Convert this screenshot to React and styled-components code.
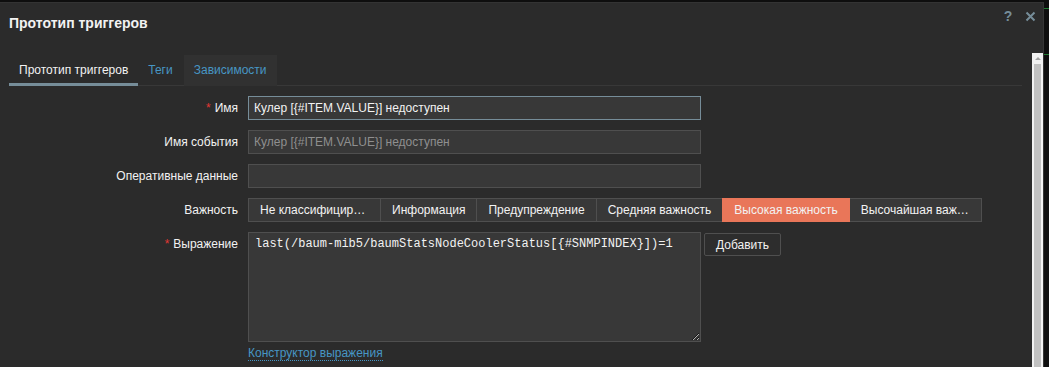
import React from "react";
import styled, { createGlobalStyle } from "styled-components";

const GlobalStyle = createGlobalStyle`
  html, body { margin: 0; padding: 0; background: #0e0e0e; }
  body { font-family: "Liberation Sans", Arial, sans-serif; font-size: 12px; color: #f2f2f2; }
  * { box-sizing: border-box; }
`;

const Page = styled.div`
  display: flex;
  height: 367px;
  overflow: hidden;
  background: #0e0e0e;
`;

const Dialog = styled.div`
  width: 1044px;
  margin-top: 2px;
  background: #2b2b2b;
  border-top: 1px solid #333333;
  border-right: 1px solid #353535;
  display: flex;
  flex-direction: column;
`;

const Backdrop = styled.div`
  flex: 1;
  display: flex;
  flex-direction: column;
`;

const GreenLine = styled.div`
  height: 1px;
  background: #1f7a31;
  margin-top: ${(p) => p.$top}px;
`;

const Header = styled.div`
  height: 50px;
  display: flex;
  align-items: flex-start;
  justify-content: space-between;
  padding: 3px 3px 0 9px;
`;

const Title = styled.h4`
  margin: 9px 0 0;
  font-size: 14px;
  line-height: 16px;
  font-weight: bold;
  color: #f2f2f2;
`;

const HeaderActions = styled.div`
  display: flex;
  gap: 2px;
`;

const IconButton = styled.button`
  width: 20px;
  height: 20px;
  padding: 0;
  border: 0;
  background: transparent;
  color: #768d99;
  font-family: "Liberation Sans", Arial, sans-serif;
  font-size: 14px;
  font-weight: bold;
  display: flex;
  align-items: center;
  justify-content: center;
`;

const Body = styled.div`
  flex: 1;
  display: flex;
  min-height: 0;
`;

const Content = styled.div`
  flex: 1;
  padding: 2px 10px 0 9px;
`;

const TabList = styled.div`
  display: flex;
  height: 31px;
  border-bottom: 1px solid #383838;
`;

const Tab = styled.div`
  height: 31px;
  padding: 0 10px;
  line-height: 30px;
  font-size: 12px;
  color: ${(p) => (p.$active ? "#f2f2f2" : "#4796c4")};
  background: ${(p) => (p.$hover ? "#313131" : "transparent")};
  border-bottom: 3px solid ${(p) => (p.$active ? "#768d99" : "transparent")};
  margin-bottom: -1px;
  margin-left: ${(p) => (p.$gap ? "1px" : "0")};
`;

const Form = styled.div`
  display: grid;
  grid-template-columns: 229px 453px 1fr;
  column-gap: 10px;
  row-gap: 10px;
  padding-top: 10px;
`;

const Label = styled.div`
  grid-column: 1;
  text-align: right;
  line-height: 24px;
  color: #f2f2f2;
  white-space: nowrap;
`;

const Asterisk = styled.span`
  color: #e33734;
  margin-right: 4px;
`;

const Field = styled.div`
  grid-column: ${(p) => (p.$wide ? "2 / 4" : "2")};
  display: flex;
  flex-direction: column;
  align-items: flex-start;
`;

const TextInput = styled.input`
  width: 453px;
  height: 24px;
  padding: 0 5px;
  margin: 0;
  background: #383838;
  border: 1px solid ${(p) => (p.$focused ? "#768d99" : "#4f4f4f")};
  color: ${(p) => (p.disabled ? "#8f8f8f" : "#f2f2f2")};
  font-family: "Liberation Sans", Arial, sans-serif;
  font-size: 12px;
  outline: none;
`;

const RadioGroup = styled.div`
  display: flex;
`;

const RadioItem = styled.div`
  height: 24px;
  padding: 0 11px;
  max-width: 133px;
  line-height: 22px;
  border: 1px solid ${(p) => (p.$selected ? "#e97659" : "#4f4f4f")};
  margin-left: ${(p) => (p.$first ? "0" : "-1px")};
  background: ${(p) => (p.$selected ? "#e97659" : "#383838")};
  color: #f2f2f2;
  white-space: nowrap;
  overflow: hidden;
  text-overflow: ellipsis;
  position: relative;
  z-index: ${(p) => (p.$selected ? 1 : 0)};
`;

const ExprRow = styled.div`
  display: flex;
  align-items: flex-start;
  gap: 3px;
`;

const TextArea = styled.textarea`
  width: 453px;
  height: 110px;
  margin: 0;
  padding: 4px 6px;
  background: #383838;
  border: 1px solid #4f4f4f;
  color: #f2f2f2;
  font-family: "Liberation Mono", "Courier New", monospace;
  font-size: 12px;
  line-height: 14px;
  resize: vertical;
  outline: none;
  color-scheme: dark;
`;

const Button = styled.button`
  height: 23px;
  margin-top: 1px;
  padding: 0 11px;
  background: #2d2d2d;
  border: 1px solid #4f4f4f;
  border-radius: 2px;
  color: #f2f2f2;
  font-family: "Liberation Sans", Arial, sans-serif;
  font-size: 12px;
`;

const Link = styled.a`
  margin-top: 4px;
  color: #4796c4;
  font-size: 12px;
  line-height: 14px;
  text-decoration: none;
  border-bottom: 1px dotted #4796c4;
`;

const Scrollbar = styled.div`
  width: 11px;
  background: #f1f1f1;
  display: flex;
  flex-direction: column;
  align-items: center;
  padding-top: 4px;
`;

const ScrollArrow = styled.div`
  width: 0;
  height: 0;
  border-left: 3px solid transparent;
  border-right: 3px solid transparent;
  border-bottom: 3px solid #a3a3a3;
`;

const ScrollThumb = styled.div`
  width: 7px;
  flex: 1;
  margin-top: 4px;
  background: #c1c1c1;
`;

const severities = [
  "Не классифицировано",
  "Информация",
  "Предупреждение",
  "Средняя важность",
  "Высокая важность",
  "Высочайшая важность",
];

export default function App() {
  return (
    <>
      <GlobalStyle />
      <Page>
        <Dialog>
          <Header>
            <Title>Прототип триггеров</Title>
            <HeaderActions>
              <IconButton aria-label="Справка">?</IconButton>
              <IconButton aria-label="Закрыть">
                <svg width="11" height="11" viewBox="0 0 11 11">
                  <path d="M1.5 1.5 L9.5 9.5 M9.5 1.5 L1.5 9.5" stroke="#768d99" strokeWidth="2" fill="none" />
                </svg>
              </IconButton>
            </HeaderActions>
          </Header>
          <Body>
            <Content>
              <TabList>
                <Tab $active>Прототип триггеров</Tab>
                <Tab>Теги</Tab>
                <Tab $hover $gap>Зависимости</Tab>
              </TabList>
              <Form>
                <Label><Asterisk>*</Asterisk>Имя</Label>
                <Field>
                  <TextInput $focused readOnly value="Кулер [{#ITEM.VALUE}] недоступен" />
                </Field>

                <Label>Имя события</Label>
                <Field>
                  <TextInput disabled value="Кулер [{#ITEM.VALUE}] недоступен" readOnly />
                </Field>

                <Label>Оперативные данные</Label>
                <Field>
                  <TextInput readOnly value="" />
                </Field>

                <Label>Важность</Label>
                <Field $wide>
                  <RadioGroup>
                    {severities.map((s, i) => (
                      <RadioItem key={s} $first={i === 0} $selected={i === 4}>{s}</RadioItem>
                    ))}
                  </RadioGroup>
                </Field>

                <Label><Asterisk>*</Asterisk>Выражение</Label>
                <Field $wide>
                  <ExprRow>
                    <TextArea readOnly value="last(/baum-mib5/baumStatsNodeCoolerStatus[{#SNMPINDEX}])=1" />
                    <Button>Добавить</Button>
                  </ExprRow>
                  <Link href="#">Конструктор выражения</Link>
                </Field>
              </Form>
            </Content>
            <Scrollbar>
              <ScrollArrow />
              <ScrollThumb />
            </Scrollbar>
          </Body>
        </Dialog>
        <Backdrop>
          <GreenLine $top={8} />
          <GreenLine $top={45} />
        </Backdrop>
      </Page>
    </>
  );
}
